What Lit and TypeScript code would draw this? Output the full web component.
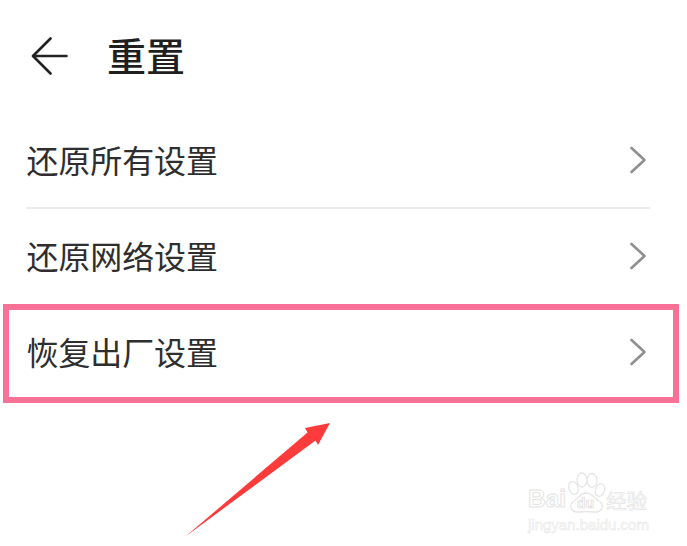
import { LitElement, html, css, svg } from "lit";
import { customElement } from "lit/decorators.js";

const chevron = html`<svg class="chev" width="18" height="28" viewBox="0 0 18 28" fill="none"><path d="M2.5 2 L15.5 14 L2.5 26" stroke="#8f8f8f" stroke-width="2.6" stroke-linecap="round" stroke-linejoin="round"/></svg>`;

const paw = svg`<g fill="#fff" stroke="#e6e6e6" stroke-width="1.3">
  <ellipse cx="7.5" cy="16" rx="4.5" ry="6.5" transform="rotate(-20 7.5 16)"/>
  <ellipse cx="16" cy="8" rx="5" ry="7"/>
  <ellipse cx="26" cy="8.500" rx="5" ry="7"/>
  <ellipse cx="34" cy="18" rx="4.500" ry="6.500" transform="rotate(20 34 18)"/>
  <path d="M20 21 C14 21 13 26 8 29 C2 33 5 41 13 40 C17 39.500 24 39.500 28 40 C36 41 39 33 33 29 C28 26 26 21 20 21 Z"/>
</g>`;

@customElement("app-root")
export class AppRoot extends LitElement {
  static styles = css`
    :host {
      display: block;
      position: relative;
      width: 687px;
      height: 546px;
      overflow: hidden;
      background: #fff;
      font-family: "Noto Sans CJK SC", "Liberation Sans", sans-serif;
      color: #2e2e2e;
    }
    .header {
      display: flex;
      align-items: center;
      height: 112px;
      padding-left: 31px;
      gap: 39px;
      box-sizing: border-box;
    }
    .back { flex: none; }
    .title {
      font-size: 39px;
      line-height: 1;
      font-weight: 500;
      color: #1f1f1f;
      margin-bottom: 4px;
    }
    .list { padding: 0 37px 0 27px; }
    .row {
      display: flex;
      align-items: center;
      justify-content: space-between;
      height: 96px;
      font-size: 32px;
      letter-spacing: -0.1px;
      box-sizing: border-box;
    }
    .row span { margin-bottom: 2px; margin-left: -0.5px; }
    .row .chev { margin-right: 3px; }
    .row.first { height: 95px; }
    .divider { height: 2px; margin-left: -1px; background: #ededed; }
    .row.second { height: 94px; }
    .row.third { height: 98px; }
    .highlight {
      position: absolute;
      left: 3px;
      top: 304px;
      width: 676px;
      height: 99px;
      box-sizing: border-box;
      border: 6px solid #fa7198;
    }
    .arrow { position: absolute; left: 180px; top: 418px; }
    .wm {
      position: absolute;
      left: 526px;
      top: 472px;
      width: 124px;
      height: 70px;
      color: #fff;
      font-family: "Liberation Sans", sans-serif;
    }
    .wm-bai {
      position: absolute;
      left: 2px;
      top: 15px;
      font-size: 24.500px;
      line-height: 1;
      font-weight: 700;
      -webkit-text-stroke: 1px #e4e4e4;
    }
    .wm-paw { position: absolute; left: 40px; top: 0; }
    .wm-du {
      position: absolute;
      left: 51px;
      top: 24px;
      font-size: 14px;
      line-height: 1;
      font-weight: 700;
      -webkit-text-stroke: 0.7px #dcdcdc;
    }
    .wm-jy {
      position: absolute;
      left: 80px;
      top: 18px;
      font-size: 20.500px;
      line-height: 1;
      font-family: "Noto Sans CJK SC", sans-serif;
      -webkit-text-stroke: 0.7px #e4e4e4;
    }
    .wm-url {
      position: absolute;
      left: 2px;
      top: 45px;
      font-size: 15px;
      line-height: 1;
      white-space: nowrap;
      -webkit-text-stroke: 0.6px #e8e8e8;
    }
  `;

  render() {
    return html`
      <div class="header">
        <svg class="back" width="37" height="38" viewBox="0 0 37 38" fill="none">
          <path d="M35.500 19 H2.500 M19.500 1.500 L2 19 L19.500 36.500" stroke="#222" stroke-width="2.600" stroke-linecap="round" stroke-linejoin="round"/>
        </svg>
        <div class="title">重置</div>
      </div>
      <div class="list">
        <div class="row first"><span>还原所有设置</span>${chevron}</div>
        <div class="divider"></div>
        <div class="row second"><span>还原网络设置</span>${chevron}</div>
        <div class="row third"><span>恢复出厂设置</span>${chevron}</div>
      </div>
      <div class="highlight"></div>
      <svg class="arrow" width="155" height="122" viewBox="0 0 155 122">
        <path d="M5.500 118.500 L127.500 14.500 L125 10 L150 5 L138 27 L135.500 22.500 Z" fill="#fd3b3b"/>
      </svg>
      <div class="wm">
        <span class="wm-bai">Bai</span>
        <svg class="wm-paw" width="44" height="44" viewBox="0 0 44 44">${paw}</svg>
        <span class="wm-du">du</span>
        <span class="wm-jy">经验</span>
        <span class="wm-url">jingyan.baidu.com</span>
      </div>
    `;
  }
}
